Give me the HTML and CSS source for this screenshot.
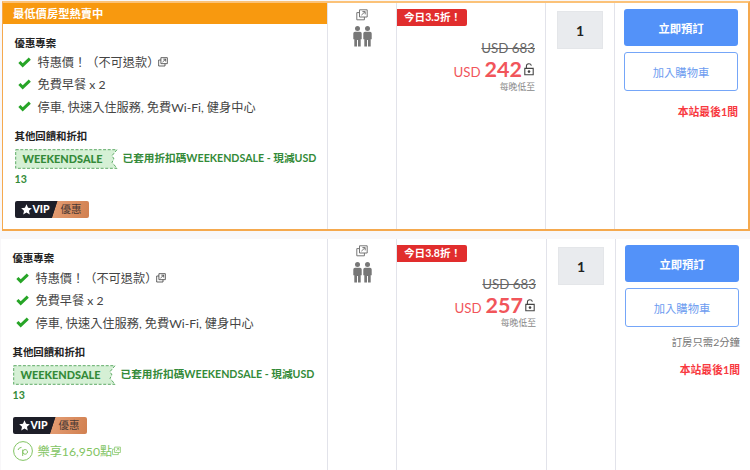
FILE: index.html
```
<!DOCTYPE html>
<html lang="zh-Hant">
<head>
    <meta charset="UTF-8">
    <meta name="viewport" content="width=device-width, initial-scale=1.0">
    <title>房型列表</title>
    <link rel="stylesheet" href="styles.css">
</head>
<body>
    <svg class="defs" width="0" height="0">
        <symbol id="popup" viewBox="0 0 12 12">
            <path d="M3.5 .8h7.7v7.2h-7.7zM3.5 3.6H.8v7.2h7.6V8M5.4 6.1l3.7-3.4M6.4 2.6h2.8v2.8" fill="none" stroke="currentColor" stroke-width="1"/>
        </symbol>
        <symbol id="check" viewBox="0 0 13 11">
            <path d="M1.4 5l3.3 3.3L11.8 1.6" fill="none" stroke="#27a527" stroke-width="3"/>
        </symbol>
        <symbol id="person" viewBox="0 0 9 21">
            <circle cx="4.5" cy="2.6" r="2.5"/>
            <path d="M2 5.8h5q1.7 0 1.7 1.8v5.6H7.7V20.5H5V14H4v6.5H1.3v-7.3H.3V7.6Q.3 5.8 2 5.8z"/>
        </symbol>
        <symbol id="lock" viewBox="0 0 10 13">
            <path d="M.8 5.4h8.4v6.4H.8zM2.4 5.2V3.4Q2.4 .8 4.9 .8q2 0 2.5 1.8" fill="none" stroke="#444" stroke-width="1.1"/>
            <circle cx="5" cy="8.6" r="1.3" fill="#444"/>
        </symbol>
        <symbol id="ticket" viewBox="0 0 103 20">
            <path d="M.7 .7H102l-5 6 2 3.3-2 3.3 5 6H.7z" fill="#d5f0d5" stroke="#5eaa66" stroke-dasharray="3 1.6"/>
        </symbol>
        <symbol id="star" viewBox="0 0 12 12">
            <path d="M6 .3l1.7 3.8 4.1.4-3.1 2.8.9 4.1L6 9.3l-3.6 2.1.9-4.1L.2 4.5l4.1-.4z" fill="#fff"/>
        </symbol>
    </svg>

    <div class="room selected">
        <div class="info">
            <div class="banner">最低價房型熱賣中</div>
            <div class="details">
                <h4>優惠專案</h4>
                <ul>
                    <li><svg class="check"><use href="#check"/></svg>特惠價！（不可退款）<svg class="popup"><use href="#popup"/></svg></li>
                    <li><svg class="check"><use href="#check"/></svg>免費早餐 x 2</li>
                    <li><svg class="check"><use href="#check"/></svg>停車, 快速入住服務, 免費Wi-Fi, 健身中心</li>
                </ul>
                <h4>其他回饋和折扣</h4>
                <div class="promo"><span class="coupon"><svg><use href="#ticket"/></svg><b>WEEKENDSALE</b></span>已套用折扣碼WEEKENDSALE - 現減USD<br>13</div>
                <div class="vip"><span class="vip-name"><svg><use href="#star"/></svg>VIP</span><span class="vip-deal">優惠</span></div>
            </div>
        </div>
        <div class="guests">
            <svg class="popup"><use href="#popup"/></svg>
            <div class="people"><svg><use href="#person"/></svg><svg><use href="#person"/></svg></div>
        </div>
        <div class="price">
            <div class="discount">今日3.5折！</div>
            <div class="old">USD 683</div>
            <div class="now"><span>USD</span><strong>242</strong><svg><use href="#lock"/></svg></div>
            <div class="note">每晚低至</div>
        </div>
        <div class="count"><div class="number">1</div></div>
        <div class="actions">
            <button class="book">立即預訂</button>
            <button class="cart">加入購物車</button>
            <div class="last">本站最後1間</div>
        </div>
    </div>

    <div class="room">
        <div class="info">
            <div class="details">
                <h4>優惠專案</h4>
                <ul>
                    <li><svg class="check"><use href="#check"/></svg>特惠價！（不可退款）<svg class="popup"><use href="#popup"/></svg></li>
                    <li><svg class="check"><use href="#check"/></svg>免費早餐 x 2</li>
                    <li><svg class="check"><use href="#check"/></svg>停車, 快速入住服務, 免費Wi-Fi, 健身中心</li>
                </ul>
                <h4>其他回饋和折扣</h4>
                <div class="promo"><span class="coupon"><svg><use href="#ticket"/></svg><b>WEEKENDSALE</b></span>已套用折扣碼WEEKENDSALE - 現減USD<br>13</div>
                <div class="vip"><span class="vip-name"><svg><use href="#star"/></svg>VIP</span><span class="vip-deal">優惠</span></div>
                <div class="points">
                    <svg class="coin" viewBox="0 0 20 20" fill="none" stroke="currentColor">
                        <circle cx="10" cy="10" r="9.4"/>
                        <path d="M5 9q.8-2.6 3.5-2.6M9.7 15V8.6M9.7 10.8a2.4 2.3 0 1 1 0 .2"/>
                    </svg>樂享16,950點<svg class="popup"><use href="#popup"/></svg>
                </div>
            </div>
        </div>
        <div class="guests">
            <svg class="popup"><use href="#popup"/></svg>
            <div class="people"><svg><use href="#person"/></svg><svg><use href="#person"/></svg></div>
        </div>
        <div class="price">
            <div class="discount">今日3.8折！</div>
            <div class="old">USD 683</div>
            <div class="now"><span>USD</span><strong>257</strong><svg><use href="#lock"/></svg></div>
            <div class="note">每晚低至</div>
        </div>
        <div class="count"><div class="number">1</div></div>
        <div class="actions">
            <button class="book">立即預訂</button>
            <button class="cart">加入購物車</button>
            <div class="quick">訂房只需2分鐘</div>
            <div class="last">本站最後1間</div>
        </div>
    </div>
</body>
</html>
```
FILE: styles.css
```
* {
    box-sizing: border-box;
}
body {
    margin: 0;
    padding: 1px 0 0 2px;
    height: 470px;
    overflow: hidden;
    background: #f8f7f9;
    font-family: Lato, "Noto Sans CJK TC", sans-serif;
    color: #444;
}
.defs {
    position: absolute;
}
.room {
    display: grid;
    grid-template-columns: 326px 69px 150px 69px 1fr;
    height: 232px;
    margin-left: -1px;
    background: #fff;
}
.room.selected {
    grid-template-columns: 324px 69px 149px 69px 1fr;
    height: 230px;
    margin: 0 0 8px;
    border: 2px solid #f5a94e;
    border-left-width: 1px;
    border-top-color: #fbc278;
}
.room > div + div {
    border-left: 1px solid #e2e3ea;
}
.banner {
    height: 21px;
    padding-left: 10px;
    background: #f8990f;
    color: #fff;
    font-size: 11.3px;
    font-weight: bold;
    line-height: 21px;
}
.details {
    padding: 9px 0 0 11.5px;
}
h4 {
    margin: 0;
    height: 20px;
    line-height: 20px;
    font-size: 10.4px;
    font-weight: bold;
    color: #222;
}
ul {
    margin: -1px 0 8px;
    padding: 0;
    list-style: none;
}
.selected ul {
    margin-top: -2px;
}
li {
    display: flex;
    align-items: center;
    height: 22.3px;
    padding-left: 3px;
    font-size: 12.2px;
    white-space: nowrap;
}
.check {
    width: 13px;
    height: 11px;
    margin-right: 7px;
}
li .popup {
    width: 10px;
    height: 10px;
    margin-left: -1px;
}
.promo {
    width: 312px;
    height: 43px;
    line-height: 21px;
    padding-top: 1px;
    font-size: 10.65px;
    font-weight: bold;
    color: #338a38;
}
.coupon {
    display: inline-grid;
    vertical-align: middle;
    width: 103px;
    height: 20px;
    margin: -2px 5px -2px 0;
}
.coupon svg,
.coupon b {
    grid-area: 1 / 1;
    width: 103px;
    height: 20px;
}
.coupon b {
    padding-left: 8px;
    line-height: 19px;
    font-size: 10.9px;
}
.vip {
    display: flex;
    width: 74px;
    height: 17px;
    margin-top: 12px;
    border-radius: 2px;
    overflow: hidden;
    background: linear-gradient(108deg, #1d1e28 0 53%, #e29a70 54%, #d18050);
    line-height: 17px;
    font-size: 10.5px;
}
.vip-name {
    display: flex;
    align-items: center;
    width: 46px;
    padding-left: 6px;
    color: #fff;
    font-weight: 900;
}
.vip-name svg {
    width: 11px;
    height: 11px;
    margin-right: 1px;
}
.vip-deal {
    color: #4b3a35;
}
.points {
    display: flex;
    align-items: center;
    height: 20px;
    margin-top: 7px;
    font-size: 12.2px;
    color: #82c463;
}
.coin {
    width: 20px;
    height: 20px;
    margin-right: 5px;
}
.points .popup {
    width: 9px;
    height: 10px;
}
.guests {
    display: flex;
    flex-direction: column;
    align-items: center;
    padding: 6px 0 0;
    color: #777;
}
.guests .popup {
    width: 12px;
    height: 12px;
    margin-bottom: 5px;
}
.people {
    display: flex;
    gap: 1px;
    fill: #777;
}
.people svg {
    width: 9px;
    height: 21px;
}
.price {
    display: flex;
    flex-direction: column;
    align-items: flex-end;
    padding: 6px 10px 0 0;
}
.discount {
    align-self: flex-start;
    width: 70px;
    height: 17px;
    padding-left: 7px;
    border-radius: 0 2px 2px 0;
    background: #e12d2d;
    color: #fff;
    font-size: 10.6px;
    font-weight: bold;
    line-height: 17px;
    white-space: nowrap;
}
.old {
    margin-top: 13px;
    font-size: 13.3px;
    line-height: 18px;
    color: #666;
    text-decoration: line-through;
}
.now {
    display: flex;
    align-items: baseline;
    height: 24px;
    line-height: 24px;
    color: #f1555a;
}
.now span {
    font-size: 13.3px;
    margin-right: 4px;
}
.now strong {
    font-size: 21.5px;
}
.now svg {
    width: 10px;
    height: 13px;
    margin: 0 1px 0 2px;
    align-self: center;
}
.note {
    font-size: 8.8px;
    line-height: 12px;
    color: #888;
}
.count {
    padding: 8px 0 0 11px;
}
.number {
    width: 46px;
    height: 38px;
    border: 1px solid #e4e6e9;
    background: #e9ebee;
    color: #222;
    font-size: 14px;
    font-weight: bold;
    line-height: 37px;
    text-align: center;
}
.actions {
    padding: 6px 10px 0 9px;
}
button {
    display: block;
    width: 114px;
    height: 37px;
    padding: 0;
    border: 0;
    border-radius: 3px;
    background: #5392f9;
    color: #fff;
    font: bold 11.3px Lato, "Noto Sans CJK TC", sans-serif;
}
.cart {
    height: 39px;
    margin-top: 6px;
    border: 1px solid #75a6f8;
    background: #fff;
    color: #6c9cf0;
    font-weight: normal;
}
.last,
.quick {
    margin-top: 12px;
    font-size: 10.8px;
    line-height: 18px;
    text-align: right;
}
.last {
    color: #f8393f;
    font-weight: bold;
}
.quick {
    margin-top: 6px;
    color: #777;
    font-size: 10.4px;
}
.quick + .last {
    margin-top: 10px;
}
```
